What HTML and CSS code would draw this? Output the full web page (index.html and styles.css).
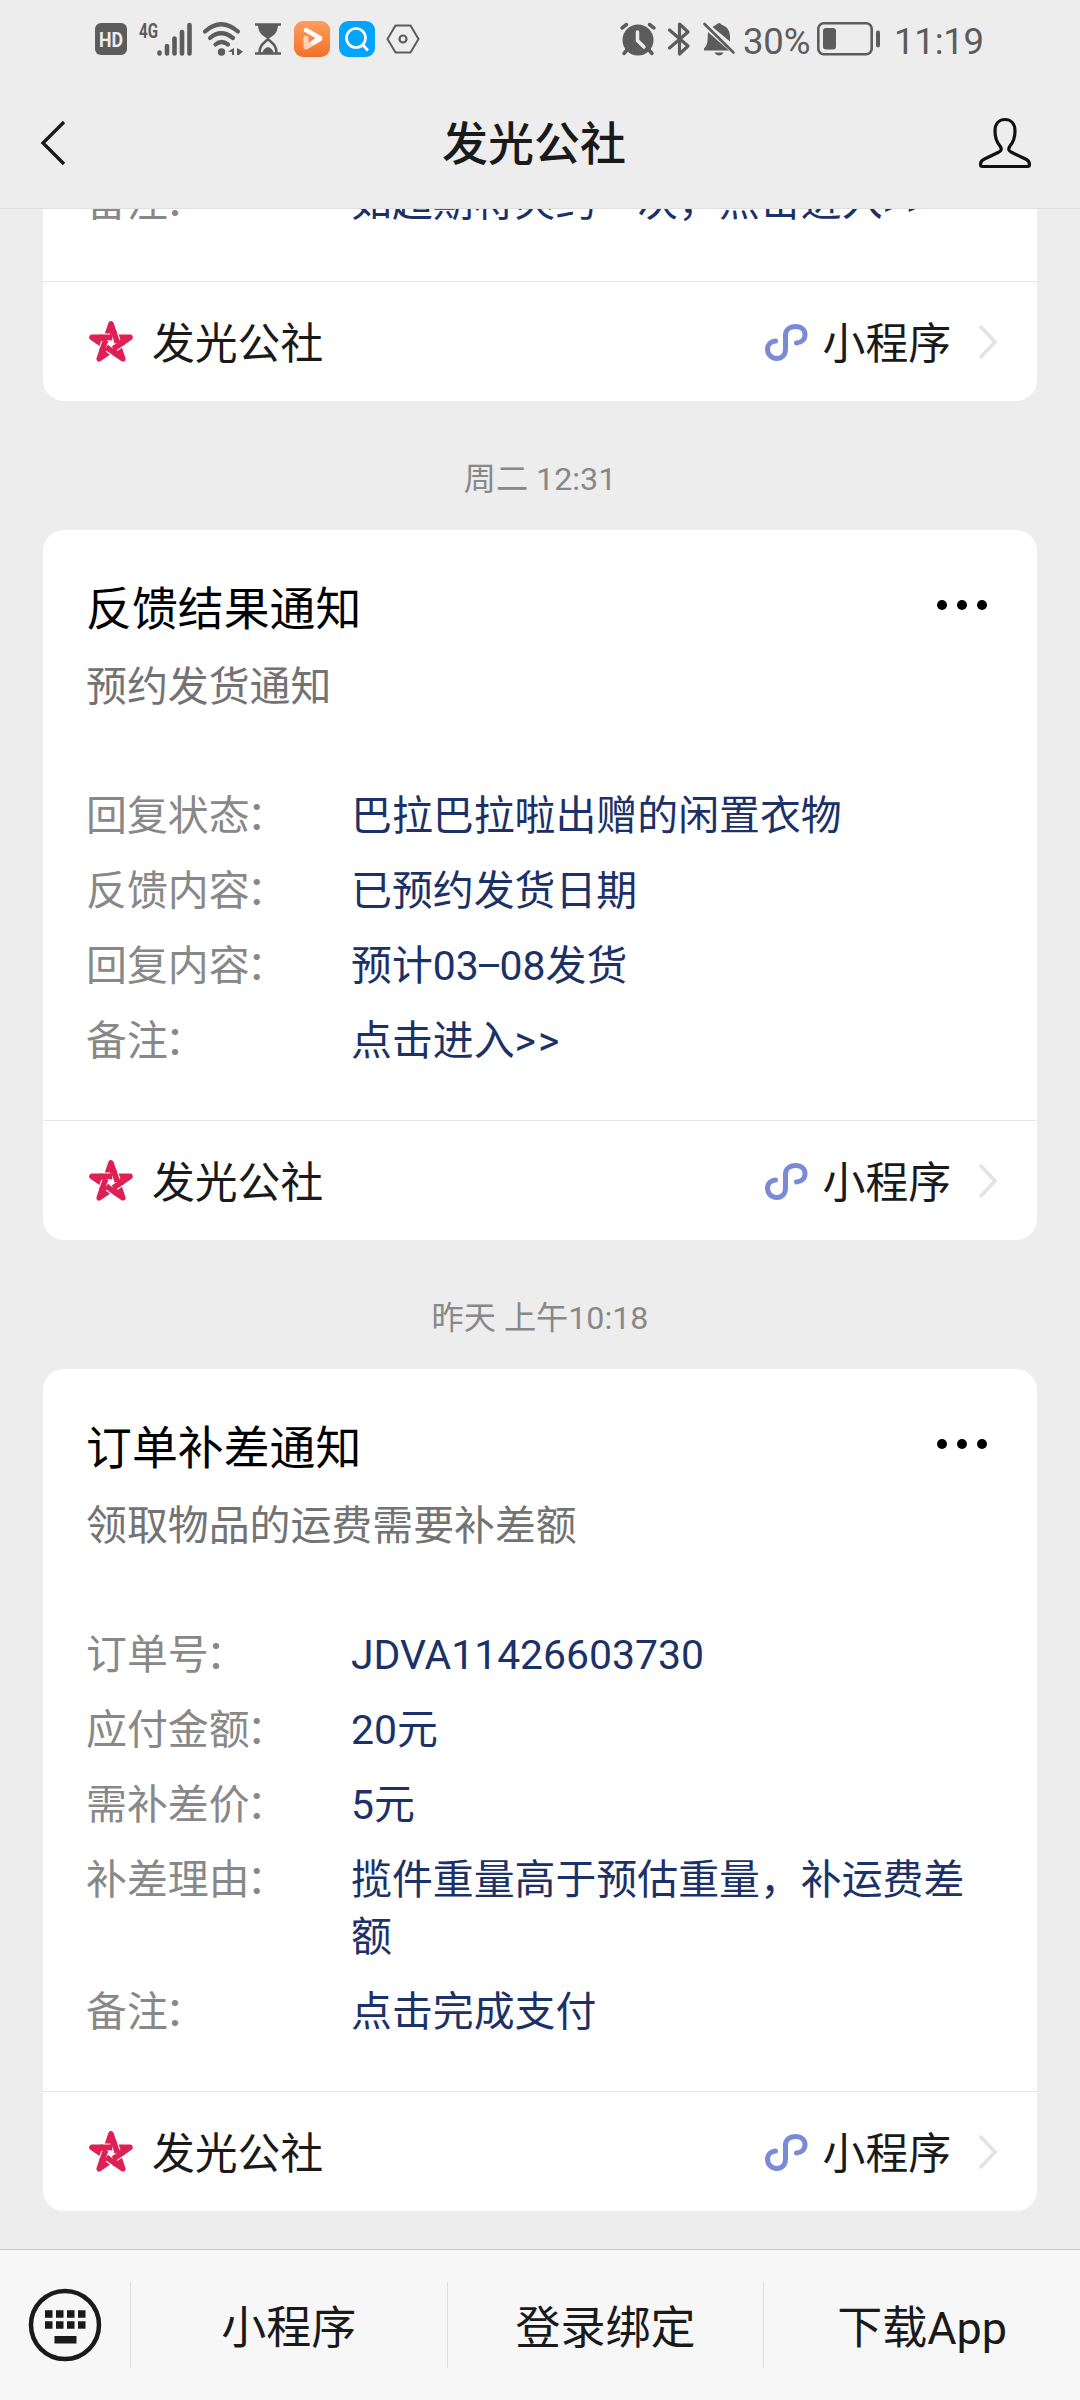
FILE: index.html
```
<!DOCTYPE html>
<html lang="zh-CN">
<head>
    <meta charset="UTF-8">
    <meta name="viewport" content="width=device-width, initial-scale=1.0">
    <title>发光公社</title>
    <link rel="stylesheet" href="styles.css">
</head>
<body>
    <!-- shared icons -->
    <svg class="defs" width="0" height="0">
        <symbol id="icon-star" viewBox="0 0 44 44">
            <path d="M22 4L33.800 38.800L3 17.400H41L10.200 38.800Z" fill="none" stroke="#de2056" stroke-width="5.600" stroke-linejoin="round"/>
            <path d="M22 5L25 15H19ZM40 17.800L31.500 24L29.500 17.800ZM33 37.800L24.500 32L29.500 27.500ZM11 37.800L14.500 27.500L19.500 32ZM4 17.800H14.500L12.500 24Z" fill="#de2056"/>
            <path d="M25.300 13.700L27.700 20.700M25.200 32.800L19 28.500M13.600 17.400H21.200M32.400 23.400L26.200 27.700M13.500 29.100L15.900 22.100" stroke="#fff" stroke-width="7.800"/>
            <path d="M24.600 11.700L28.400 22.700M27 34L17.300 27.300M11.500 17.400H23.200M34.200 22.100L24.400 28.900M12.800 31.100L16.600 20.100" stroke="#de2056" stroke-width="5.600"/>
        </symbol>
        <symbol id="icon-mini" viewBox="0 0 44 40">
            <path d="M11.500 19C6.500 19.500 3.500 22.500 3.500 27C3.500 32.500 7.500 36.500 12.700 36.500C18 36.500 21.500 32.500 21.500 27V13C21.500 8 25.600 4.500 31.500 4.500C37.500 4.500 41 8 41 12.500C41 17.500 37.500 20.500 32.500 21" fill="none" stroke="#7b8ad6" stroke-width="5" stroke-linecap="round"/>
        </symbol>
        <symbol id="icon-arrow" viewBox="0 0 20 36">
            <path d="M2 2L17 18L2 34" fill="none" stroke="#e4e4e4" stroke-width="3.800"/>
        </symbol>
    </svg>

    <header class="header">
        <div class="status-bar">
            <div class="status-left">
                <svg class="hd" width="32" height="32" viewBox="0 0 32 32">
                    <rect width="32" height="32" rx="6" fill="#5c5c5c"/>
                    <text x="4" y="23.500" textLength="24" lengthAdjust="spacingAndGlyphs" class="hd-text">HD</text>
                </svg>
                <svg class="signal" width="54" height="36" viewBox="0 0 54 36">
                    <text x="0" y="17" textLength="19" lengthAdjust="spacingAndGlyphs" class="net-text">4G</text>
                    <path d="M20.500 31.500V32.500M28 25V32.500M35.500 17.500V32.500M43 11V32.500M50.500 4V32.500" stroke="#5c5c5c" stroke-width="4.600" stroke-linecap="round"/>
                </svg>
                <svg class="wifi" width="42" height="36" viewBox="0 0 42 36">
                    <path d="M3 10.500Q19 -4 36 10.500M8 17Q19 7.500 31 17M13.500 23.500Q19.500 18.500 26 23.500" fill="none" stroke="#5c5c5c" stroke-width="4.200" stroke-linecap="round"/>
                    <circle cx="19.500" cy="31" r="3.700" fill="#5c5c5c"/>
                    <path d="M32 27V34H30V31L26 30.500ZM35 27L41 30.500L37 34H35Z" fill="#5c5c5c"/>
                </svg>
                <svg class="hourglass" width="26" height="32" viewBox="0 0 26 32">
                    <path d="M0 1.500H26M0 30.500H26" stroke="#5c5c5c" stroke-width="2.500"/>
                    <path d="M3 1H23C23 10 19 12 14.500 15H11.500C7 12 3 10 3 1Z" fill="#5c5c5c"/>
                    <path d="M4.500 30C4.500 22 9 20 13 16C17 20 21.500 22 21.500 30" fill="none" stroke="#5c5c5c" stroke-width="2.500"/>
                    <path d="M7 30Q9 25 13 24Q17 25 19 30Z" fill="#5c5c5c"/>
                </svg>
                <svg class="app-icon" width="36" height="36" viewBox="0 0 36 36">
                    <defs>
                        <linearGradient id="orange" x1="0" y1="0" x2="0" y2="1"><stop offset="0" stop-color="#ff9d5c"/><stop offset="1" stop-color="#f2702a"/></linearGradient>
                    </defs>
                    <rect width="36" height="36" rx="9" fill="url(#orange)"/>
                    <path d="M12 17V26L26 18" fill="none" stroke="#ffd3b5" stroke-width="5" stroke-linejoin="round" stroke-linecap="round"/>
                    <path d="M12 9L26 17L19 21.500" fill="none" stroke="#fff" stroke-width="4.500" stroke-linejoin="round" stroke-linecap="round"/>
                </svg>
                <svg class="app-icon" width="36" height="36" viewBox="0 0 36 36">
                    <rect width="36" height="36" rx="9" fill="#05a4fc"/>
                    <circle cx="17" cy="17" r="9.500" fill="none" stroke="#fff" stroke-width="2.700"/>
                    <path d="M23 23L29 29.500" stroke="#fff" stroke-width="2.700"/>
                </svg>
                <svg class="hexagon" width="34" height="30" viewBox="0 0 34 30">
                    <path d="M9.500 1.500H24.500L32.500 15L24.500 28.500H9.500L1.500 15Z" fill="none" stroke="#5c5c5c" stroke-width="2" stroke-linejoin="round"/>
                    <circle cx="17" cy="15" r="3.500" fill="none" stroke="#5c5c5c" stroke-width="2.200"/>
                </svg>
            </div>
            <div class="status-right">
                <svg width="36" height="34" viewBox="0 0 36 34">
                    <circle cx="18" cy="18" r="15.500" fill="#5c5c5c"/>
                    <path d="M2 6L6.500 2.500M34 6L29.500 2.500M7 28L4 31.500M29 28L32 31.500" stroke="#5c5c5c" stroke-width="3.500" stroke-linecap="round"/>
                    <path d="M17.500 10V18.500L24 25" fill="none" stroke="#ededed" stroke-width="3.500" stroke-linecap="round"/>
                </svg>
                <svg class="bluetooth" width="24" height="36" viewBox="0 0 24 36">
                    <path d="M2.500 9L21 25L12.500 33V3L21 11L2.500 27" fill="none" stroke="#5c5c5c" stroke-width="3.200" stroke-linecap="round" stroke-linejoin="round"/>
                </svg>
                <svg class="bell" width="32" height="34" viewBox="0 0 32 34">
                    <path d="M9.500 5Q12 3 13.500 2.500Q16 -0.500 18.500 2.500Q27 6 27 14V19.500Z" fill="#5c5c5c"/>
                    <path d="M5 10L26 28.500H1V26.500Q4 24 4.500 19Z" fill="#5c5c5c"/>
                    <path d="M1.500 2L30.500 30.500" stroke="#5c5c5c" stroke-width="2.600" stroke-linecap="round"/>
                    <path d="M11.500 30.500H20.500Q19 33.500 16 33.500Q13 33.500 11.500 30.500Z" fill="#5c5c5c"/>
                </svg>
                <span class="percent">30%</span>
                <svg class="battery" width="64" height="34" viewBox="0 0 64 34">
                    <rect x="1.300" y="1.300" width="53.400" height="31" rx="5.500" fill="none" stroke="#5c5c5c" stroke-width="2.600"/>
                    <rect x="6" y="6" width="13" height="21.500" rx="3" fill="#5c5c5c"/>
                    <rect x="59" y="8.500" width="4" height="17" rx="2" fill="#5c5c5c"/>
                </svg>
                <span class="clock">11:19</span>
            </div>
        </div>
        <nav class="nav-bar">
            <svg width="26" height="46" viewBox="0 0 26 46">
                <path d="M25 2L4 23L25 44" fill="none" stroke="#1a1a1a" stroke-width="3.300"/>
            </svg>
            <h1>发光公社</h1>
            <svg width="54" height="52" viewBox="0 0 54 52">
                <path d="M27 2.500C20.500 2.500 17 7.500 17 14C17 21 19 25.500 22 29C24 32 23.500 33.500 21 35L6 42.300C3 43.800 2.500 45.500 2.500 47.500Q2.500 49.500 4.500 49.500H49.500Q51.500 49.500 51.500 47.500C51.500 45.500 51 43.800 48 42.300L33 35C30.500 33.500 30 32 32 29C35 25.500 37 21 37 14C37 7.500 33.500 2.500 27 2.500Z" fill="none" stroke="#111" stroke-width="3.200"/>
            </svg>
        </nav>
    </header>

    <main class="chat">
        <section class="card">
            <dl class="details">
                <dt>备注<span class="colon">：</span></dt><dd>如超期将爽约一次，点击进入<span class="gt">&gt;&gt;</span></dd>
            </dl>
            <div class="card-footer">
                <svg class="star" width="44" height="44"><use href="#icon-star"/></svg>
                <span class="name">发光公社</span>
                <svg class="mini" width="44" height="40"><use href="#icon-mini"/></svg>
                <span>小程序</span>
                <svg class="arrow" width="20" height="36"><use href="#icon-arrow"/></svg>
            </div>
        </section>

        <p class="time">周二 12:31</p>

        <section class="card">
            <div class="card-head">
                <h2>反馈结果通知</h2>
                <div class="more"><i></i><i></i><i></i></div>
            </div>
            <p class="subtitle">预约发货通知</p>
            <dl class="details">
                <dt>回复状态<span class="colon">：</span></dt><dd>巴拉巴拉啦出赠的闲置衣物</dd>
                <dt>反馈内容<span class="colon">：</span></dt><dd>已预约发货日期</dd>
                <dt>回复内容<span class="colon">：</span></dt><dd>预计03<span class="dash">–</span>08发货</dd>
                <dt>备注<span class="colon">：</span></dt><dd>点击进入<span class="gt">&gt;&gt;</span></dd>
            </dl>
            <div class="card-footer">
                <svg class="star" width="44" height="44"><use href="#icon-star"/></svg>
                <span class="name">发光公社</span>
                <svg class="mini" width="44" height="40"><use href="#icon-mini"/></svg>
                <span>小程序</span>
                <svg class="arrow" width="20" height="36"><use href="#icon-arrow"/></svg>
            </div>
        </section>

        <p class="time">昨天 上午10:18</p>

        <section class="card">
            <div class="card-head">
                <h2>订单补差通知</h2>
                <div class="more"><i></i><i></i><i></i></div>
            </div>
            <p class="subtitle">领取物品的运费需要补差额</p>
            <dl class="details">
                <dt>订单号<span class="colon">：</span></dt><dd>JDVA11426603730</dd>
                <dt>应付金额<span class="colon">：</span></dt><dd>20元</dd>
                <dt>需补差价<span class="colon">：</span></dt><dd>5元</dd>
                <dt>补差理由<span class="colon">：</span></dt><dd>揽件重量高于预估重量，补运费差额</dd>
                <dt>备注<span class="colon">：</span></dt><dd>点击完成支付</dd>
            </dl>
            <div class="card-footer">
                <svg class="star" width="44" height="44"><use href="#icon-star"/></svg>
                <span class="name">发光公社</span>
                <svg class="mini" width="44" height="40"><use href="#icon-mini"/></svg>
                <span>小程序</span>
                <svg class="arrow" width="20" height="36"><use href="#icon-arrow"/></svg>
            </div>
        </section>
    </main>

    <footer class="menu">
        <div class="keyboard">
            <svg width="74" height="74" viewBox="0 0 74 74">
                <circle cx="37" cy="37" r="34" fill="none" stroke="#1a1a1a" stroke-width="4.500"/>
                <path d="M17 26H58M17 37H58" stroke="#1a1a1a" stroke-width="7.500" stroke-dasharray="7.500 3.500"/>
                <rect x="26.500" y="48" width="22" height="7.500" fill="#1a1a1a"/>
            </svg>
        </div>
        <div class="menu-item">小程序</div>
        <div class="menu-item">登录绑定</div>
        <div class="menu-item">下载App</div>
    </footer>
</body>
</html>
```
FILE: styles.css
```
* {
    box-sizing: border-box;
    margin: 0;
    padding: 0;
}

body {
    display: flex;
    flex-direction: column;
    height: 2400px;
    background-color: #ededed;
    color: #1a1a1a;
    font-family: Roboto, "Noto Sans CJK SC", sans-serif;
    font-size: 40.900px;
    overflow: hidden;
}

svg {
    display: block;
    flex-shrink: 0;
    overflow: visible;
}

.defs {
    position: absolute;
}

/* status bar + title */
.header {
    height: 209px;
    flex-shrink: 0;
    border-bottom: 1px solid #dfdfdf;
}

.status-bar {
    display: flex;
    justify-content: space-between;
    height: 78px;
    padding: 0 99px 0 95px;
    color: #5c5c5c;
}

.status-left,
.status-right {
    display: flex;
    align-items: center;
}

.hd-text {
    font-size: 21px;
    font-weight: 700;
    fill: #ededed;
}

.net-text {
    font-size: 21px;
    font-weight: 700;
    fill: #5c5c5c;
}

.signal {
    margin-left: 12px;
}

.wifi {
    margin-left: 9px;
}

.hourglass {
    margin-left: 11px;
}

.app-icon {
    margin-left: 9px;
}

.hourglass + .app-icon {
    margin-left: 13px;
}

.hexagon {
    margin-left: 11px;
}

.bluetooth {
    margin-left: 11px;
}

.bell {
    margin-left: 12px;
}

.percent {
    width: 67px;
    margin-left: 8px;
    padding-top: 4px;
    font-size: 36.500px;
    letter-spacing: -0.200px;
    white-space: nowrap;
}

.battery {
    margin-left: 7px;
}

.clock {
    width: 87px;
    margin-left: 13px;
    padding-top: 4px;
    font-size: 36.500px;
    letter-spacing: -0.200px;
    white-space: nowrap;
}

.nav-bar {
    display: flex;
    align-items: center;
    justify-content: space-between;
    height: 130px;
    padding: 0 48px 0 39px;
}

.nav-bar h1 {
    padding: 2px 0 0 25px;
    font-size: 46px;
    font-weight: 500;
    line-height: 60px;
}

/* messages */
.chat {
    display: flex;
    flex: 1;
    flex-direction: column;
    justify-content: flex-end;
    min-height: 0;
    padding: 0 43px 38px;
    overflow: hidden;
}

.card {
    flex-shrink: 0;
    background-color: #fff;
    border-radius: 21px;
}

.card-head {
    display: flex;
    align-items: center;
    justify-content: space-between;
    height: 60px;
    margin-top: 49px;
    padding: 0 50px 0 43px;
}

.card-head h2 {
    color: #000;
    font-size: 45.900px;
    font-weight: 400;
    line-height: 60px;
}

.more {
    display: flex;
    gap: 10px;
    margin-top: -8px;
}

.more i {
    width: 10px;
    height: 10px;
    border-radius: 50%;
    background-color: #000;
}

.subtitle {
    margin-top: 20px;
    padding: 0 43px;
    color: #737373;
    line-height: 57px;
}

.details {
    display: grid;
    grid-template-columns: 265px 1fr;
    row-gap: 18px;
    padding: 0 50px 50px 43px;
    line-height: 57px;
}

.subtitle + .details {
    margin-top: 72px;
}

.details dt {
    color: #888;
}

.details dd {
    color: #1b3168;
}

.colon {
    margin-left: -3px;
}

.gt {
    letter-spacing: 2px;
}

.dash {
    margin: 0 -3px;
}

.card-footer {
    display: flex;
    align-items: center;
    height: 120px;
    padding: 0 39px 0 46px;
    border-top: 1px solid #e6e6e6;
    font-size: 42.800px;
    line-height: 56px;
}

.card-footer span {
    padding-top: 4px;
}

.card-footer .name {
    margin-left: 19px;
    margin-right: auto;
}

.card-footer .mini {
    margin-right: 15px;
}

.card-footer .arrow {
    margin-left: 27px;
}

.time {
    height: 129px;
    flex-shrink: 0;
    color: #888;
    font-size: 32.200px;
    line-height: 157px;
    text-align: center;
}

/* bottom menu */
.menu {
    display: flex;
    align-items: center;
    flex-shrink: 0;
    height: 151px;
    background-color: #f7f7f7;
    border-top: 1px solid #c9c9c9;
}

.keyboard {
    width: 130px;
    padding-left: 28px;
}

.menu-item {
    flex: 1;
    height: 86px;
    border-left: 1px solid #dedede;
    font-size: 45px;
    line-height: 94px;
    text-align: center;
}
```
